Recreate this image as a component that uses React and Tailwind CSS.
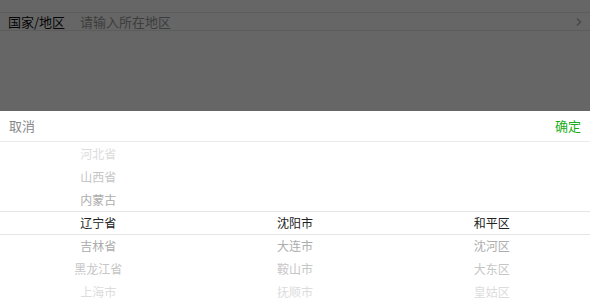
const provinces = ["河北省", "山西省", "内蒙古", "辽宁省", "吉林省", "黑龙江省", "上海市"];
const cities = ["", "", "", "沈阳市", "大连市", "鞍山市", "抚顺市"];
const districts = ["", "", "", "和平区", "沈河区", "大东区", "皇姑区"];

// fade rows away from the selected one
const rowColors = [
  "text-[#dcdcdc]",
  "text-[#c6c6c6]",
  "text-[#adadad]",
  "text-[#222]",
  "text-[#adadad]",
  "text-[#c6c6c6]",
  "text-[#dcdcdc]",
];

const Column = ({ items }) => (
  <div className="flex-1 flex flex-col">
    {items.map((item, i) => (
      <div key={i} className={`h-[23px] flex items-center justify-center text-[12px] ${rowColors[i]}`}>
        {item}
      </div>
    ))}
  </div>
);

const App = () => {
  return (
    <div
      className="relative w-[590px] h-[302px] overflow-hidden bg-white"
      style={{ fontFamily: '"Noto Sans CJK SC", "Noto Sans", sans-serif' }}
    >
      {/* Page */}
      <div className="pt-[12px]">
        <div className="flex items-center h-[19px] border-t border-b border-[#e5e5e5] pl-[8px] pr-[7px] text-[13px]">
          <div className="w-[72px] text-[#111]">国家/地区</div>
          <div className="flex-1 text-[#999]">请输入所在地区</div>
          <svg width="8" height="10" viewBox="0 0 8 10">
            <path d="M2 1.5 L5.5 5 L2 8.5" fill="none" stroke="#b2b2b2" strokeWidth="1.5" />
          </svg>
        </div>
      </div>

      {/* Mask */}
      <div className="absolute inset-0 bg-black/60" />

      {/* Picker sheet */}
      <div className="absolute left-0 right-0 bottom-0 h-[191px] bg-white overflow-hidden">
        <div className="flex items-center justify-between h-[31px] px-[9px] border-b border-[#ececec] text-[13px]">
          <span className="text-[#888]">取消</span>
          <span className="text-[#1aad19]">确定</span>
        </div>
        <div className="relative flex">
          <div className="absolute left-0 right-0 top-[69px] h-[24px] border-t border-b border-[#e5e5e5]" />
          <Column items={provinces} />
          <Column items={cities} />
          <Column items={districts} />
        </div>
      </div>
    </div>
  );
};

export default App;
